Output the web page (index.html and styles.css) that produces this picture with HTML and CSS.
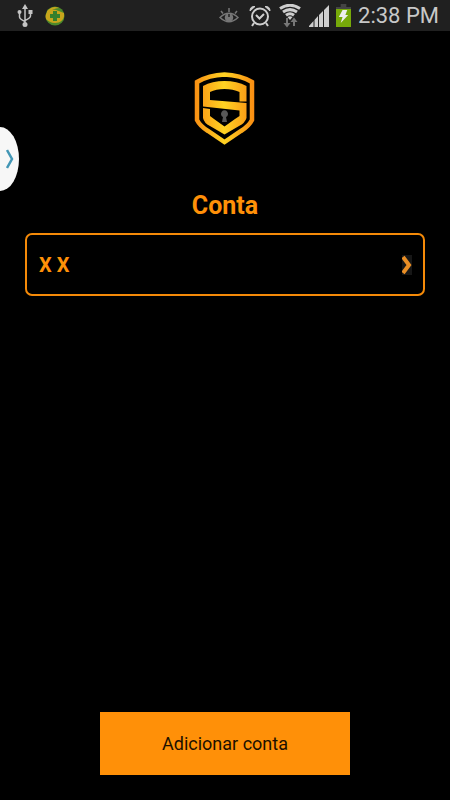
FILE: index.html
```html
<!DOCTYPE html>
<html lang="pt">
<head>
<meta charset="utf-8">
<meta name="viewport" content="width=device-width, initial-scale=1">
<title>Conta</title>
<link rel="stylesheet" href="styles.css">
</head>
<body>
<header class="status">
  <div class="status-group status-left">
    <svg width="16" height="24" viewBox="0 0 16 24" fill="none" stroke="#c4c4c4" stroke-width="1.5" aria-hidden="true">
      <path d="M8 4v16M2.500 9v4q0 2 5.500 4.500M13.500 9v3q0 2-5.500 4.500"/>
      <path d="M8 0l3 5H5z" fill="#c4c4c4" stroke="none"/>
      <circle cx="2.500" cy="8" r="2" fill="#c4c4c4" stroke="none"/>
      <path d="M11.500 6h4v4h-4z" fill="#c4c4c4" stroke="none"/>
      <circle cx="8" cy="20.500" r="2.500" fill="#c4c4c4" stroke="none"/>
    </svg>
    <svg width="20" height="20" viewBox="0 0 20 20" aria-hidden="true">
      <circle cx="10" cy="10" r="9.500" fill="#4c8a2b"/>
      <path d="M1 13C-1 6 5 3 11 4l8 3c1 6-3 10-9 10C6 17 3 15 1 13z" fill="#c7a51c"/>
      <path d="M2 5Q8-1 14 2Q8 2 2 8z" fill="#c7a51c"/>
      <path d="M8 5h4v3h3v4h-3v3H8v-3H5V8h3z" fill="#34802d"/>
    </svg>
  </div>
  <div class="status-group">
    <svg class="eye" width="20" height="16" viewBox="0 0 20 16" fill="none" stroke="#777" stroke-width="1.500" aria-hidden="true">
      <path d="M1 9.500Q10 1 19 9.500Q10 18 1 9.500zM10 4V0M4 5.500L2 3M16 5.500L18 3"/>
      <circle cx="10" cy="9.500" r="3.500" fill="#777"/>
      <path d="M10 6v3" stroke="#202020"/>
    </svg>
    <svg class="alarm" width="22" height="22" viewBox="0 0 22 22" fill="none" stroke="#cecece" stroke-width="2" aria-hidden="true">
      <circle cx="11" cy="11.500" r="8"/>
      <path d="M7 10l3.500 3.500L15 9M5 18l-2 3M17 18l2 3"/>
      <path d="M1 6Q1 1 6 1.500zM21 6Q21 1 16 1.500z" fill="#cecece" stroke-width="1"/>
    </svg>
    <svg class="wifi" width="22" height="24" viewBox="0 0 22 24" fill="none" stroke="#cecece" stroke-width="3" aria-hidden="true">
      <path d="M1 4.500Q11-2 21 4.500M4 8Q11 3.200 18 8M7 11.300Q11 8.300 15 11.300"/>
      <path d="M8.500 13Q11 11.500 13.500 13L11 16z" fill="#cecece" stroke="none"/>
      <path d="M7 14h2v5h2.500L8 23.500 4.500 19H7zM14 22h2v-4h2.500L15 13.500 11.500 18H14z" fill="#777" stroke="none"/>
    </svg>
    <svg class="signal" width="20" height="22" viewBox="0 0 20 22" fill="#cecece" aria-hidden="true">
      <path d="M0 22v-1l4.500-5v6zM5.500 22v-7L9 11v11zM10 22V10l4-4v16zM15 22V5l5-5v22z"/>
    </svg>
    <svg class="battery" width="15" height="23" viewBox="0 0 16 23" preserveAspectRatio="none" aria-hidden="true">
      <path d="M5 0h6v3h5v4H0V3h5z" fill="#444"/>
      <path d="M0 5h16v18H0z" fill="#76a909"/>
      <path d="M7 6h5l-2 5h3L5 19l2-6H3z" fill="#eee"/>
    </svg>
    <time class="clock">2:38 PM</time>
  </div>
</header>
<button class="handle" type="button" aria-label="Abrir painel">
  <svg width="8" height="20" viewBox="0 0 8 20" fill="none" stroke="#4296b5" stroke-width="2.500" aria-hidden="true"><path d="M1 1l5 9-5 9"/></svg>
</button>
<main class="screen">
  <svg class="logo" width="62" height="74" viewBox="0 0 62 74" fill="none" aria-hidden="true">
    <defs>
      <linearGradient id="gold" x1="0" y1="0" x2="60" y2="0" gradientUnits="userSpaceOnUse">
        <stop offset="0" stop-color="#f98d12"/><stop offset=".5" stop-color="#ffd323"/><stop offset="1" stop-color="#f98d12"/>
      </linearGradient>
    </defs>
    <path d="M30.500 2.500Q46 3 58 10V48Q55 54 47 59L30.500 70L14 59Q6 54 3 48V10Q15 3 30.500 2.500z" stroke="url(#gold)" stroke-width="4.500"/>
    <path fill="url(#gold)" d="M30.500 9Q43 9 52.500 14V29.500H45.500V20Q39 17 30.500 17T16 20V28L52.500 31V46Q51 51 45 54L30.500 62.500L16 54Q10 51 9 46V36L16 37V44L20 47L30.500 54.500L41 47L45.500 44V38.500L9 34.500V14Q18 9 30.500 9z"/>
    <path d="M28 50l1-5a3.500 3.500 0 1 1 3 0l1 5z" fill="#585858"/>
  </svg>
  <h1 class="title">Conta</h1>
  <button class="account" type="button">
    <span>X X</span>
    <svg class="chevron" width="10" height="20" viewBox="0 0 10 20" fill="none" stroke="#e98e25" stroke-width="4" aria-hidden="true"><path d="M1 2l6 8-6 8"/></svg>
  </button>
  <button class="add" type="button">Adicionar conta</button>
</main>
</body>
</html>
```

FILE: styles.css
```css
* {
  box-sizing: border-box;
}

body {
  display: flex;
  flex-direction: column;
  min-height: 100vh;
  margin: 0;
  background: #000;
  color: #ff9008;
  font-family: Roboto, sans-serif;
}

button {
  margin: 0;
  font-family: inherit;
  cursor: pointer;
}

svg {
  display: block;
  flex: none;
}

.status {
  display: flex;
  justify-content: space-between;
  height: 31px;
  padding: 0 11px 0 17px;
  background: #202020;
}

.status-group {
  display: flex;
  align-items: center;
}

.status-left {
  gap: 12px;
}

.eye {
  margin-right: 10px;
}

.alarm,
.wifi {
  margin-right: 8px;
}

.signal,
.battery {
  margin-right: 7px;
}

.clock {
  color: #c8c8c8;
  font-size: 22px;
  line-height: 30px;
}

.handle {
  position: absolute;
  top: 127px;
  left: 0;
  display: flex;
  align-items: center;
  justify-content: flex-end;
  width: 19px;
  height: 64px;
  padding: 0 5px 0 0;
  border: 0;
  border-radius: 0 19px 19px 0 / 0 32px 32px 0;
  background: #f7f7f7;
}

.screen {
  display: flex;
  flex: 1;
  flex-direction: column;
  align-items: center;
  padding: 41px 25px 25px;
}

.title {
  margin: 45px 0 12px;
  font-size: 25px;
  font-weight: 700;
  line-height: 30px;
}

.account {
  display: flex;
  align-items: center;
  justify-content: space-between;
  width: 100%;
  height: 63px;
  padding: 0 11px 0 12px;
  border: 2px solid #f58a08;
  border-radius: 7px;
  background: #000;
  color: #ff9008;
  font-size: 20px;
  font-weight: 700;
}

.chevron {
  background: #171717;
}

.add {
  width: 250px;
  height: 63px;
  margin-top: auto;
  border: 0;
  background: #ff9008;
  color: #1c1000;
  font-size: 18px;
}
```
